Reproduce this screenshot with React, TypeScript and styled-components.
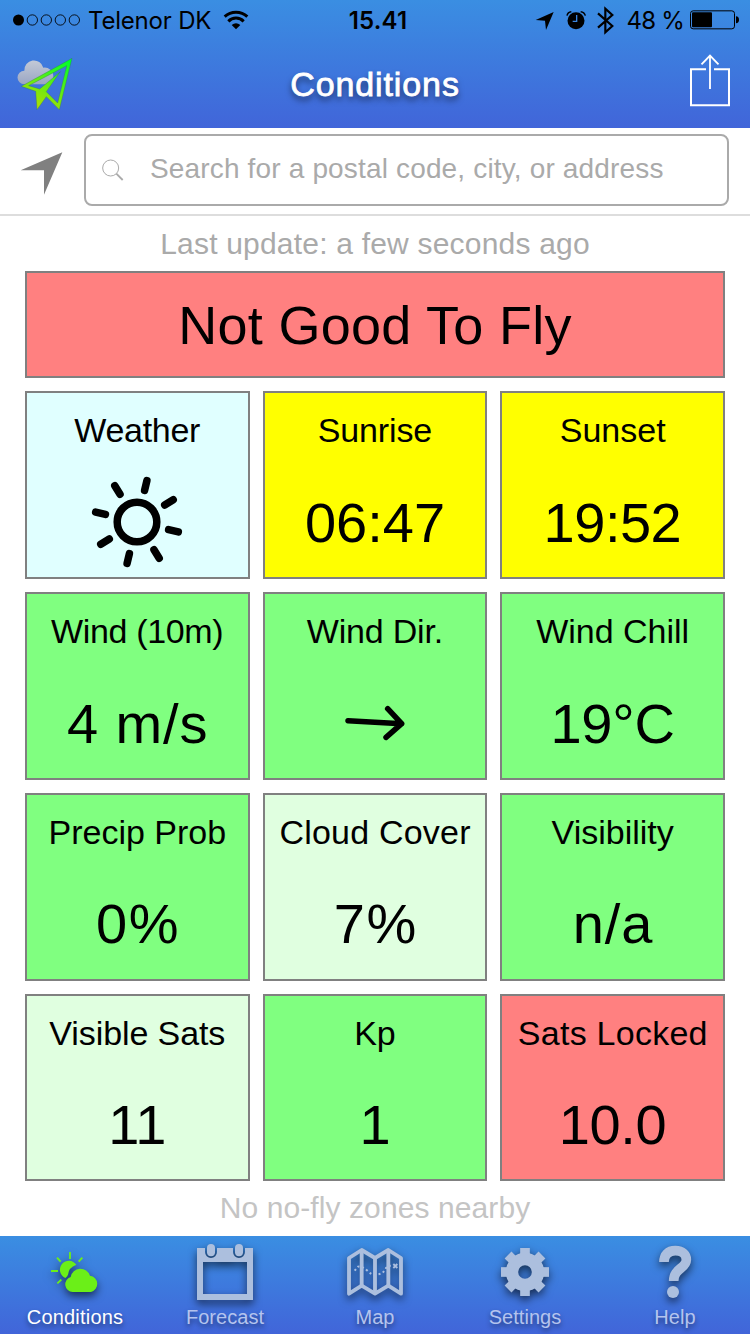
import React from "react";
import styled, { createGlobalStyle } from "styled-components";

const GlobalStyle = createGlobalStyle`
  * { box-sizing: border-box; }
  body {
    margin: 0;
    background: #fff;
    font-family: "Liberation Sans", Arial, sans-serif;
    color: #000;
  }
  svg { display: block; flex: none; overflow: visible; }
`;

const Screen = styled.div`
  width: 750px;
  height: 1334px;
  display: flex;
  flex-direction: column;
  overflow: hidden;
  background: #fff;
`;

const Header = styled.header`
  height: 128px;
  flex: none;
  background: linear-gradient(#3a8ee2, #4165d9);
`;

const StatusBar = styled.div`
  height: 40px;
  display: grid;
  grid-template-columns: 1fr auto 1fr;
  align-items: center;
  padding: 0 10px 0 13px;
  font-family: Inter, sans-serif;
  font-size: 24px;
  line-height: 36px;
`;

const StatusGroup = styled.div<{ $end?: boolean }>`
  display: flex;
  align-items: center;
  justify-content: ${(p) => (p.$end ? "flex-end" : "flex-start")};
  white-space: nowrap;
`;

const Carrier = styled.span`
  margin: 2px 13px 0 7px;
  letter-spacing: -0.2px;
`;

const Clock = styled.span`
  font-weight: 600;
  margin: 2px 0 0 3px;
  letter-spacing: 0.2px;
`;

const Percent = styled.span`
  margin: 2px 6px 0 12px;
  letter-spacing: -0.8px;
`;

const NavBar = styled.div`
  height: 88px;
  display: grid;
  grid-template-columns: 60px 1fr 60px;
  align-items: center;
  padding: 0 20px 0 17px;
`;

const Title = styled.h1`
  margin: 0 0 0 3px;
  text-align: center;
  color: #fff;
  font-size: 34px;
  line-height: 88px;
  font-weight: 400;
  letter-spacing: 0.9px;
  -webkit-text-stroke: 0.8px #fff;
  text-shadow: 0 4px 6px rgba(0, 0, 0, 0.6);
`;

const NavEnd = styled.div`
  display: flex;
  justify-content: flex-end;
  padding-bottom: 8px;
`;

const SearchRow = styled.div`
  height: 88px;
  flex: none;
  display: flex;
  align-items: flex-start;
  padding: 6px 21px 0 20px;
  gap: 21px;
  border-bottom: 2px solid #ddd;
`;

const LocateButton = styled.div`
  padding-top: 18px;
`;

const SearchField = styled.div`
  flex: 1;
  height: 72px;
  display: flex;
  align-items: center;
  gap: 26px;
  padding: 0 16px;
  border: 2px solid #aaa;
  border-radius: 8px;
`;

const Placeholder = styled.span`
  font-size: 28px;
  line-height: 66px;
  margin-bottom: 2px;
  color: #aaa;
  white-space: nowrap;
  letter-spacing: 0.16px;
`;

const Main = styled.main`
  flex: 1;
  padding: 0 25px;
  display: flex;
  flex-direction: column;
`;

const Note = styled.p<{ $height: number; $color: string; $track: number }>`
  margin: 0;
  height: ${(p) => p.$height}px;
  line-height: ${(p) => p.$height}px;
  text-align: center;
  font-size: 30px;
  color: ${(p) => p.$color};
  letter-spacing: ${(p) => p.$track}px;
`;

const Banner = styled.div`
  height: 107px;
  border: 2px solid #808080;
  background: #ff8080;
  text-align: center;
  font-size: 54px;
  line-height: 105px;
  letter-spacing: 0.3px;
`;

const Grid = styled.div`
  margin-top: 13px;
  display: grid;
  grid-template-columns: repeat(3, 1fr);
  grid-template-rows: repeat(3, 188px) 187px;
  gap: 13px;
`;

const tones = {
  ice: "#e0ffff",
  yellow: "#ffff00",
  green: "#80ff80",
  pale: "#e0ffe0",
  red: "#ff8080",
};

const TileLabel = styled.div<{ $track: number }>`
  font-size: 34px;
  line-height: 40px;
  letter-spacing: ${(p) => p.$track}px;
  margin-right: ${(p) => -p.$track}px;
`;

const TileValue = styled.div<{ $track: number }>`
  height: 106px;
  margin-top: 20px;
  display: flex;
  align-items: center;
  font-size: 56px;
  line-height: 106px;
  letter-spacing: ${(p) => p.$track}px;
  margin-right: ${(p) => -p.$track}px;

  svg {
    margin-bottom: 2px;
  }
`;

const Tile = styled.section<{ $tone: keyof typeof tones }>`
  border: 2px solid #808080;
  background: ${(p) => tones[p.$tone]};
  display: flex;
  flex-direction: column;
  align-items: center;
  padding-top: 17px;
  white-space: nowrap;

  &:nth-child(n + 7) ${TileValue} {
    margin-top: 19px;
  }
`;

const TabBar = styled.nav`
  height: 98px;
  flex: none;
  display: grid;
  grid-template-columns: repeat(5, 1fr);
  background: linear-gradient(#3a8ee2, #4165d9);
`;

const Tab = styled.div<{ $active?: boolean }>`
  text-align: center;
  font-size: 20px;
  line-height: 26px;
  letter-spacing: ${(p) => (p.$active ? 0.2 : 0.05)}px;
  color: ${(p) => (p.$active ? "#fff" : "#b4c4ee")};
  text-shadow: 0 3px 5px rgba(0, 0, 0, 0.45);

  svg {
    color: ${(p) => (p.$active ? "#6bef18" : "#acbfde")};
    filter: drop-shadow(0 4px 4px rgba(0, 0, 0, 0.6));
  }
`;

const SignalDots = () => (
  <svg width="68" height="12" viewBox="39 44 204 36">
    <circle cx="55.5" cy="62" r="16.5" />
    {[97, 139, 181, 223].map((x) => (
      <circle key={x} cx={x} cy="62" r="15.5" fill="none" stroke="#000" strokeWidth="2.6" />
    ))}
  </svg>
);

const Wifi = () => (
  <svg width="24" height="18" viewBox="674 33 72 54" fill="none" stroke="#000" strokeWidth="9">
    <path d="M676 50 A50 50 0 0 1 744 50" />
    <path d="M687 64 A32 32 0 0 1 733 64" />
    <path d="M697 75 Q710 64 723 75 L710 88 Z" fill="#000" stroke="none" />
  </svg>
);

const StatusIcons = () => (
  <svg width="79" height="27" viewBox="109 21 237 81">
    <path d="M108 60 L162 36 L139 90 L136 62 Z" />
    <circle cx="229" cy="62" r="25.5" />
    <path d="M231 45 V64 H219" fill="none" stroke="#3b85df" strokeWidth="4" />
    <path d="M202 47 Q204 36 215 35 M243 35 Q254 36 257 47" fill="none" stroke="#000" strokeWidth="4.500" />
    <path d="M295 40 L338 78 L317 97 V26 L338 45 L295 83" fill="none" stroke="#000" strokeWidth="6.500" />
  </svg>
);

const Battery = () => (
  <svg width="50" height="20" viewBox="570 32 150 60">
    <rect x="571.5" y="34.5" width="132" height="54" rx="8" fill="none" stroke="#000" strokeWidth="3" />
    <rect x="576" y="39" width="60" height="45" rx="3" />
    <path d="M708 51 Q717 52 717 61 Q717 71 708 72 Z" />
  </svg>
);

const AppLogo = () => (
  <svg width="58" height="54" viewBox="50 174 174 162">
    <defs>
      <linearGradient id="plane" x1="0.85" y1="0" x2="0.3" y2="1">
        <stop offset="0" stopColor="#00ff2a" />
        <stop offset="1" stopColor="#b4dc00" />
      </linearGradient>
      <linearGradient id="cloud" x1="0" y1="0" x2="0" y2="1">
        <stop offset="0" stopColor="#c3c9d6" />
        <stop offset="1" stopColor="#9aa6c4" />
      </linearGradient>
    </defs>
    <path
      d="M72 256 A20 20 0 0 1 72 215 A29 29 0 0 1 129 206 A26 26 0 0 1 159 232 Q158 256 138 256 Z"
      fill="url(#cloud)"
    />
    <path
      fillRule="evenodd"
      fill="url(#plane)"
      stroke="#2c6a5c"
      strokeWidth="1"
      d="M63 262 L215 178 L177 332 L138 293 L110 332 L106 277 Z M85 260 L118 270 L180 218 L138 278 L172 312 L199 200 Z"
    />
  </svg>
);

const ShareIcon = () => (
  <svg width="40" height="53" viewBox="570 161 120 159" fill="none" stroke="#fff" strokeWidth="6">
    <path d="M618 207 H573 V315 H687 V207 H642" />
    <path d="M630 166 V266 M604.500 192 L630 166 L655.500 192" strokeWidth="5.500" />
  </svg>
);

const LocateIcon = () => (
  <svg width="43" height="43" viewBox="60 82 129 129">
    <path d="M62 137 L187 83 L132 210 V137 Z" fill="#808080" />
  </svg>
);

const SearchIcon = () => (
  <svg width="22" height="22" viewBox="305 103 66 66" fill="none" stroke="#aaa">
    <circle cx="331" cy="130" r="24" strokeWidth="3" />
    <path d="M348 147 L367 166" strokeWidth="5.500" />
  </svg>
);

const SunIcon = () => (
  <svg width="96" height="96" viewBox="-48 -48 96 96" fill="none" stroke="#000" strokeWidth="7.500" strokeLinecap="round">
    <circle r="19.800" />
    {[0, 1, 2, 3, 4, 5, 6, 7].map((i) => (
      <path key={i} d="M0 -32.500 V-42.500" transform={`rotate(${13.5 + i * 45})`} />
    ))}
  </svg>
);

const WindArrow = () => (
  <svg width="60" height="36" viewBox="256 347 180 108" fill="none" stroke="#000" strokeWidth="16.500" strokeLinecap="round" strokeLinejoin="round">
    <path d="M265 394 L426 403 M384 358 L426 403 L379 444" />
  </svg>
);

const TabIcon = ({ children }: { children: React.ReactNode }) => (
  <svg width="150" height="68" viewBox="0 18 450 204" fill="currentColor">
    {children}
  </svg>
);

const ConditionsIcon = () => (
  <TabIcon>
    <path d="M229 104 A27 27 0 1 0 196 144 Q202 140 204 134 Q206 112 229 104 Z" />
    <path d="M218 186 A23 23 0 0 1 212 141 A30 30 0 0 1 270 137 A25 25 0 0 1 273 186 Z" />
    <path
      d="M210 66 V87 M171 83 L182 95 M247 83 L236 95 M153 123 H174 M172 160 L184 149"
      stroke="currentColor"
      strokeWidth="5.500"
    />
  </TabIcon>
);

const ForecastIcon = () => (
  <TabIcon>
    <path
      fillRule="evenodd"
      d="M141 54 H165 V66 A18 18 0 0 0 201 66 V54 H249 V66 A18 18 0 0 0 285 66 V54 H309 V210 H141 Z M159 96 V192 H291 V96 Z"
    />
    <rect x="171" y="42" width="24" height="37" rx="12" />
    <rect x="255" y="42" width="24" height="37" rx="12" />
  </TabIcon>
);

const MapIcon = () => (
  <TabIcon>
    <g fill="none" stroke="currentColor" strokeWidth="11.500" strokeLinejoin="round">
      <path d="M147 84 L185 60 L225 84 L265 60 L303 84 V191 L265 167 L225 191 L185 167 L147 191 Z" />
      <path d="M185 60 V167 M225 84 V191 M265 60 V167" />
    </g>
    <path
      d="M164 122 L174 110 Q188 108 202 122 Q216 138 232 134 Q252 130 258 114 L272 106"
      fill="none"
      stroke="currentColor"
      strokeWidth="6"
      strokeDasharray="6 8"
    />
    <path d="M280 102 L292 114 M292 102 L280 114" stroke="currentColor" strokeWidth="5.500" />
  </TabIcon>
);

const SettingsIcon = () => (
  <TabIcon>
    <g transform="translate(225 126)">
      <circle r="39" fill="none" stroke="currentColor" strokeWidth="37" />
      {[0, 1, 2, 3, 4, 5, 6, 7].map((i) => (
        <rect key={i} x="-14.500" y="-72" width="29" height="24" transform={`rotate(${i * 45})`} />
      ))}
    </g>
  </TabIcon>
);

const HelpIcon = () => (
  <TabIcon>
    <path
      d="M192 96 C192 74 204 62 226 62 C248 62 259 74 259 89 C259 116 221 114 221 153"
      fill="none"
      stroke="currentColor"
      strokeWidth="29"
    />
    <circle cx="219" cy="186" r="18" />
  </TabIcon>
);

type TileData = {
  label: string;
  value: React.ReactNode;
  tone: keyof typeof tones;
  labelTrack?: number;
  valueTrack?: number;
};

const tiles: TileData[] = [
  { label: "Weather", value: <SunIcon />, tone: "ice", labelTrack: -0.3 },
  { label: "Sunrise", value: "06:47", tone: "yellow", labelTrack: -0.15 },
  { label: "Sunset", value: "19:52", tone: "yellow", valueTrack: -0.5 },
  { label: "Wind (10m)", value: "4 m/s", tone: "green", labelTrack: -0.35, valueTrack: 0.9 },
  { label: "Wind Dir.", value: <WindArrow />, tone: "green", labelTrack: -0.2 },
  { label: "Wind Chill", value: "19°C", tone: "green", valueTrack: -0.2 },
  { label: "Precip Prob", value: "0%", tone: "green", valueTrack: 1.5 },
  { label: "Cloud Cover", value: "7%", tone: "pale", labelTrack: 0.2, valueTrack: 1.5 },
  { label: "Visibility", value: "n/a", tone: "green", valueTrack: 0.9 },
  { label: "Visible Sats", value: "11", tone: "pale", labelTrack: -0.1 },
  { label: "Kp", value: "1", tone: "green" },
  { label: "Sats Locked", value: "10.0", tone: "red", labelTrack: 0.25, valueTrack: -0.4 },
];

const tabs = [
  { label: "Conditions", Icon: ConditionsIcon },
  { label: "Forecast", Icon: ForecastIcon },
  { label: "Map", Icon: MapIcon },
  { label: "Settings", Icon: SettingsIcon },
  { label: "Help", Icon: HelpIcon },
];

export default function App() {
  return (
    <Screen>
      <GlobalStyle />
      <Header>
        <StatusBar>
          <StatusGroup>
            <SignalDots />
            <Carrier>Telenor DK</Carrier>
            <Wifi />
          </StatusGroup>
          <Clock>15.41</Clock>
          <StatusGroup $end>
            <StatusIcons />
            <Percent>48 %</Percent>
            <Battery />
          </StatusGroup>
        </StatusBar>
        <NavBar>
          <AppLogo />
          <Title>Conditions</Title>
          <NavEnd>
            <ShareIcon />
          </NavEnd>
        </NavBar>
      </Header>
      <SearchRow>
        <LocateButton>
          <LocateIcon />
        </LocateButton>
        <SearchField>
          <SearchIcon />
          <Placeholder>Search for a postal code, city, or address</Placeholder>
        </SearchField>
      </SearchRow>
      <Main>
        <Note $height={55} $color="#aaa" $track={0.2}>
          Last update: a few seconds ago
        </Note>
        <Banner>Not Good To Fly</Banner>
        <Grid>
          {tiles.map((t) => (
            <Tile key={t.label} $tone={t.tone}>
              <TileLabel $track={t.labelTrack ?? 0}>{t.label}</TileLabel>
              <TileValue $track={t.valueTrack ?? 0}>{t.value}</TileValue>
            </Tile>
          ))}
        </Grid>
        <Note $height={54} $color="#c4c4c4" $track={0.1}>
          No no-fly zones nearby
        </Note>
      </Main>
      <TabBar>
        {tabs.map(({ label, Icon }, i) => (
          <Tab key={label} $active={i === 0}>
            <Icon />
            {label}
          </Tab>
        ))}
      </TabBar>
    </Screen>
  );
}
